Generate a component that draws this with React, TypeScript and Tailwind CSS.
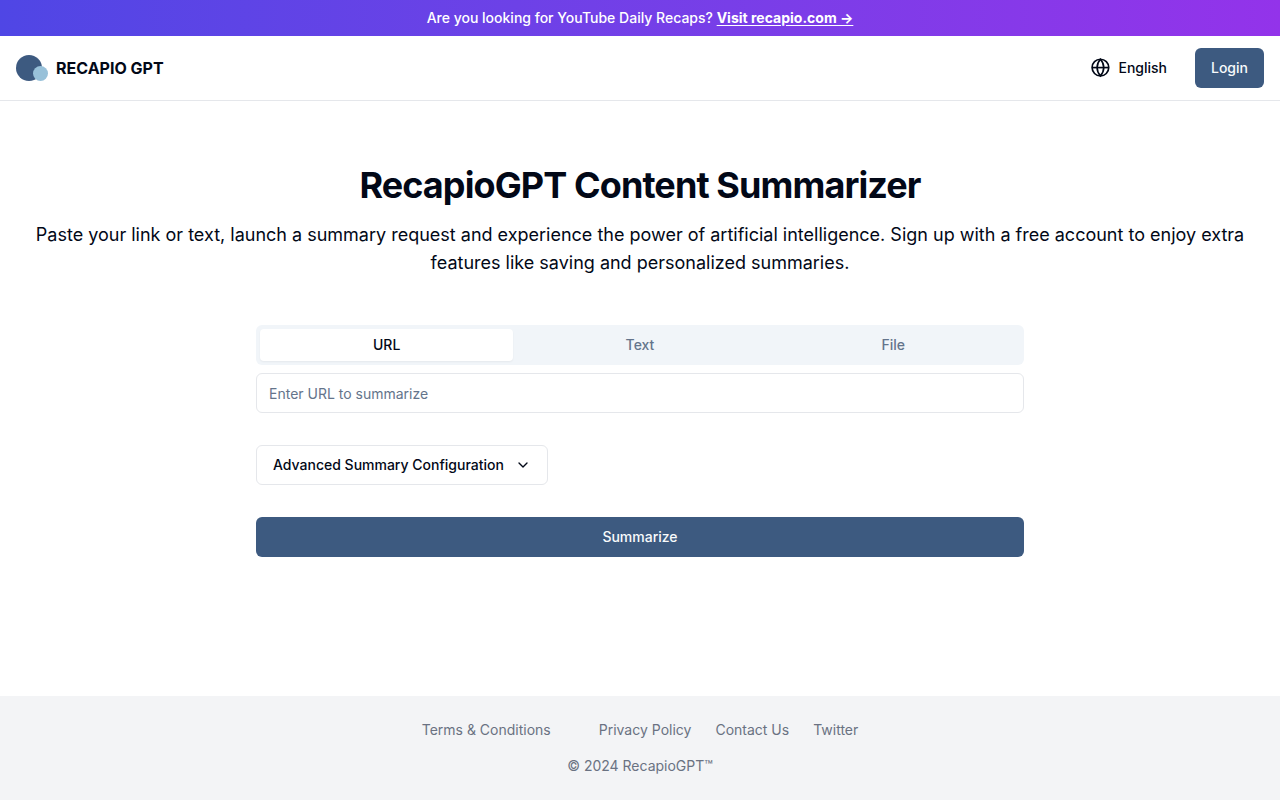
import { useState } from 'react';
import type { FormEvent } from 'react';
import { ChevronDown } from 'lucide-react';

type Source = 'url' | 'text' | 'file';

const sources: { id: Source; label: string }[] = [
  { id: 'url', label: 'URL' },
  { id: 'text', label: 'Text' },
  { id: 'file', label: 'File' },
];

function Logo() {
  return (
    <svg width="32" height="26" viewBox="0 0 32 26" aria-hidden="true">
      <circle cx="13" cy="13" r="13" fill="#3d5a80" />
      <circle cx="24.5" cy="18.5" r="7.5" fill="#98c1d9" />
    </svg>
  );
}

function GlobeIcon() {
  return (
    <svg width="20" height="20" viewBox="0 0 24 24" fill="none" stroke="currentColor" strokeWidth="2" aria-hidden="true">
      <circle cx="12.5" cy="11.5" r="10" />
      <path d="M2.5 11.5h20" />
      <path d="M12.5 1.5a15.3 15.3 0 0 1 4 10 15.3 15.3 0 0 1-4 10 15.3 15.3 0 0 1-4-10 15.3 15.3 0 0 1 4-10z" />
    </svg>
  );
}

function Banner() {
  return (
    <div className="bg-linear-to-r from-[#4f46e5] to-[#9333ea] px-4 py-2 text-center text-sm font-medium text-white">
      Are you looking for YouTube Daily Recaps?{' '}
      <a href="#recapio" className="font-bold underline underline-offset-2">
        Visit recapio.com →
      </a>
    </div>
  );
}

function Header() {
  return (
    <header className="flex h-[65px] items-center justify-between border-b border-gray-200 px-4">
      <a href="#home" className="flex items-center gap-2 font-bold">
        <Logo />
        RECAPIO GPT
      </a>
      <div className="flex items-center gap-3">
        <button type="button" className="flex h-10 items-center gap-2 px-4 text-sm font-medium">
          <GlobeIcon />
          English
        </button>
        <button type="button" className="h-10 rounded-md bg-[#3d5a80] px-4 text-sm font-medium text-[#f8fafc]">
          Login
        </button>
      </div>
    </header>
  );
}

function SummaryForm() {
  const [source, setSource] = useState<Source>('url');
  const [value, setValue] = useState('');
  const [showConfig, setShowConfig] = useState(false);

  const handleSubmit = (e: FormEvent) => {
    e.preventDefault();
  };

  return (
    <form onSubmit={handleSubmit} className="mx-auto mt-12 max-w-3xl">
      <div role="tablist" className="grid h-10 grid-cols-3 rounded-md bg-[#f1f5f9] p-1 text-sm font-medium">
        {sources.map((s) => (
          <button
            key={s.id}
            type="button"
            role="tab"
            aria-selected={source === s.id}
            onClick={() => setSource(s.id)}
            className={`rounded-sm ${source === s.id ? 'bg-white text-[#020817] shadow-xs' : 'text-[#64748b]'}`}
          >
            {s.label}
          </button>
        ))}
      </div>

      <input
        type={source === 'file' ? 'file' : 'text'}
        key={source}
        aria-label={source === 'url' ? 'URL to summarize' : 'Content to summarize'}
        placeholder={source === 'url' ? 'Enter URL to summarize' : 'Enter text to summarize'}
        value={source === 'file' ? undefined : value}
        onChange={(e) => setValue(e.target.value)}
        className="mt-2 h-10 w-full rounded-md border border-gray-200 px-3 text-sm placeholder:text-[#64748b]"
      />

      <button
        type="button"
        aria-expanded={showConfig}
        onClick={() => setShowConfig(!showConfig)}
        className="mt-8 flex h-10 w-[292px] items-center justify-between rounded-md border border-gray-200 px-4 text-sm font-medium"
      >
        Advanced Summary Configuration
        <ChevronDown size={16} />
      </button>

      <button type="submit" className="mt-8 h-10 w-full rounded-md bg-[#3d5a80] text-sm font-medium text-[#f8fafc]">
        Summarize
      </button>
    </form>
  );
}

function Footer() {
  return (
    <footer className="bg-gray-100 py-6 text-center text-sm text-gray-500">
      <nav className="flex justify-center gap-6">
        <a href="#terms" className="mr-6">Terms &amp; Conditions</a>
        <a href="#privacy">Privacy Policy</a>
        <a href="#contact">Contact Us</a>
        <a href="#twitter">Twitter</a>
      </nav>
      <p className="mt-4">© 2024 RecapioGPT™</p>
    </footer>
  );
}

export default function App() {
  return (
    <div className="flex min-h-screen flex-col bg-white font-['Inter',sans-serif] text-[#020817]">
      <Banner />
      <Header />
      <main className="grow px-4 pt-16 pb-8">
        <h1 className="text-center text-4xl font-bold tracking-tight">RecapioGPT Content Summarizer</h1>
        <p className="mt-4 text-center text-lg leading-7">
          Paste your link or text, launch a summary request and experience the power of artificial intelligence. Sign up
          with a free account to enjoy extra features like saving and personalized summaries.
        </p>
        <SummaryForm />
      </main>
      <Footer />
    </div>
  );
}
